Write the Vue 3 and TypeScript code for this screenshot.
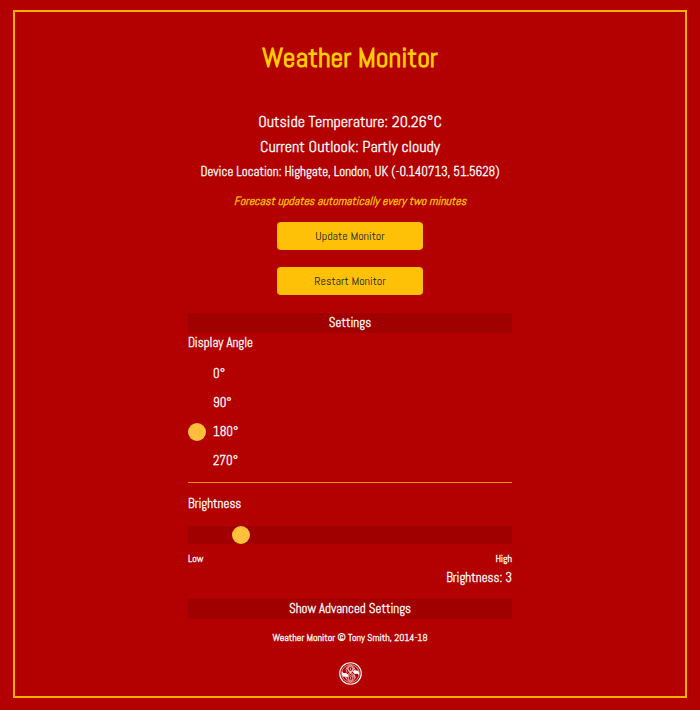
<script setup lang="ts">
import { ref } from 'vue'

const angles: number[] = [0, 90, 180, 270]
const angle = ref<number>(180)
const brightness = ref<number>(3)
const temperature = ref<string>('20.26')
const outlook = ref<string>('Partly cloudy')
const location = ref<string>('Highgate, London, UK (-0.140713, 51.5628)')
</script>

<template>
  <main class="frame">
    <h1 class="title">Weather Monitor</h1>

    <section class="status">
      <p class="reading">Outside Temperature: {{ temperature }}°C</p>
      <p class="reading">Current Outlook: {{ outlook }}</p>
      <p class="location">Device Location: {{ location }}</p>
      <p class="note">Forecast updates automatically every two minutes</p>
    </section>

    <div class="actions">
      <button type="button" class="action">Update Monitor</button>
      <button type="button" class="action">Restart Monitor</button>
    </div>

    <section class="settings">
      <h2 class="bar">Settings</h2>
      <fieldset class="angles">
        <legend>Display Angle</legend>
        <label v-for="a in angles" :key="a" class="angle">
          <input v-model="angle" type="radio" name="angle" :value="a" />
          <span>{{ a }}°</span>
        </label>
      </fieldset>
      <hr class="rule" />
      <label class="slider-label" for="brightness">Brightness</label>
      <input id="brightness" v-model.number="brightness" class="slider" type="range" min="1" max="15" />
      <div class="scale"><span>Low</span><span>High</span></div>
      <p class="value">Brightness: {{ brightness }}</p>
      <button type="button" class="bar advanced">Show Advanced Settings</button>
    </section>

    <footer class="footer">
      <p>Weather Monitor © Tony Smith, 2014-18</p>
      <svg class="seal" viewBox="0 0 48 48" fill="none" stroke="#fff" aria-hidden="true">
        <circle cx="24" cy="24" r="22.5" stroke-width="2.4" />
        <circle cx="24" cy="24" r="18.5" stroke-width="1.2" />
        <g stroke-width="1.3">
          <path d="M17 22a9 9 0 1 1 14 0M17 26a9 9 0 1 0 14 0" />
          <circle cx="24" cy="14.5" r="5" />
          <circle cx="24" cy="33.5" r="5" />
          <path d="M17 12c0 8 17 12 17 22M31 12c0 8-17 12-17 22" />
          <path d="M20 19c2 5 10 6 10 13M28 19c-2 5-10 6-10 13" />
          <path d="M24 12v5M24 31v5" />
        </g>
        <path d="M6.5 20c2 4 6 4 9 2 0 4 5 4 4 7-2 3-7 2-12 1-1-3-2-6-1-10zM41.500 28c-2-4-6-4-9-2 0-4-5-4-4-7 2-3 7-2 12-1 1 3 2 6 1 10z" fill="#fff" stroke="none" />
      </svg>
    </footer>
  </main>
</template>

<style>
body {
  margin: 0;
  background: #b30000;
}
</style>

<style scoped>
.frame {
  box-sizing: border-box;
  margin: 10px 13px 12px;
  padding: 29px 16px 11px;
  border: 2px solid #f8b000;
  display: flex;
  flex-direction: column;
  align-items: center;
  background: #b30000;
  color: #fff;
  font-family: Abel, "Roboto Condensed", "Liberation Sans Narrow", "Liberation Sans", sans-serif;
  font-size: 13px;
  line-height: 20px;
  -webkit-text-stroke: 0.3px currentColor;
}
p,
h1,
h2 {
  margin: 0;
}
.title {
  color: #ffcc00;
  font-size: 28px;
  line-height: 34px;
  font-weight: 700;
  -webkit-text-stroke: 0;
}
.status {
  margin-top: 34px;
  text-align: center;
}
.reading {
  font-size: 16px;
  line-height: 25px;
}
.location {
  line-height: 25px;
}
.note {
  margin-top: 5px;
  color: #ffcc00;
  font-size: 12px;
  line-height: 25px;
  font-style: italic;
}
.actions {
  width: 146px;
  margin-top: 8px;
  display: flex;
  flex-direction: column;
  gap: 17px;
}
.action {
  height: 28px;
  padding: 0;
  border: 0;
  border-radius: 4px;
  background: #ffc107;
  color: #212529;
  font: inherit;
  font-size: 12px;
  -webkit-text-stroke: 0;
}
.settings {
  width: 100%;
  max-width: 324px;
  margin-top: 18px;
  display: flex;
  flex-direction: column;
}
.bar {
  padding: 0;
  border: 0;
  background: #a00000;
  color: #fff;
  font: inherit;
  text-align: center;
}
.angles {
  margin: 0;
  padding: 0;
  border: 0;
  min-width: 0;
}
legend {
  padding: 0 0 6px;
}
.angle {
  display: flex;
  align-items: center;
  gap: 7px;
  height: 29px;
}
.angle input {
  appearance: none;
  width: 18px;
  height: 18px;
  margin: 0;
  border-radius: 50%;
}
.angle input:checked {
  background: #ffbf3b;
}
.rule {
  width: 100%;
  margin: 7px 0 11px;
  border: 0;
  border-top: 1px solid #e69a00;
}
.slider {
  appearance: none;
  width: 100%;
  height: 18px;
  margin: 12px 0 7px;
  background: #a00000;
}
.slider::-webkit-slider-thumb {
  appearance: none;
  width: 18px;
  height: 18px;
  border-radius: 50%;
  background: #ffbf3b;
}
.scale {
  display: flex;
  justify-content: space-between;
  font-size: 10px;
  line-height: 16px;
}
.value {
  margin-top: 1px;
  text-align: right;
}
.advanced {
  margin-top: 11px;
}
.footer {
  margin-top: 9px;
  display: flex;
  flex-direction: column;
  align-items: center;
  gap: 14px;
  font-size: 10px;
}
.seal {
  width: 23px;
  height: 23px;
}
</style>
